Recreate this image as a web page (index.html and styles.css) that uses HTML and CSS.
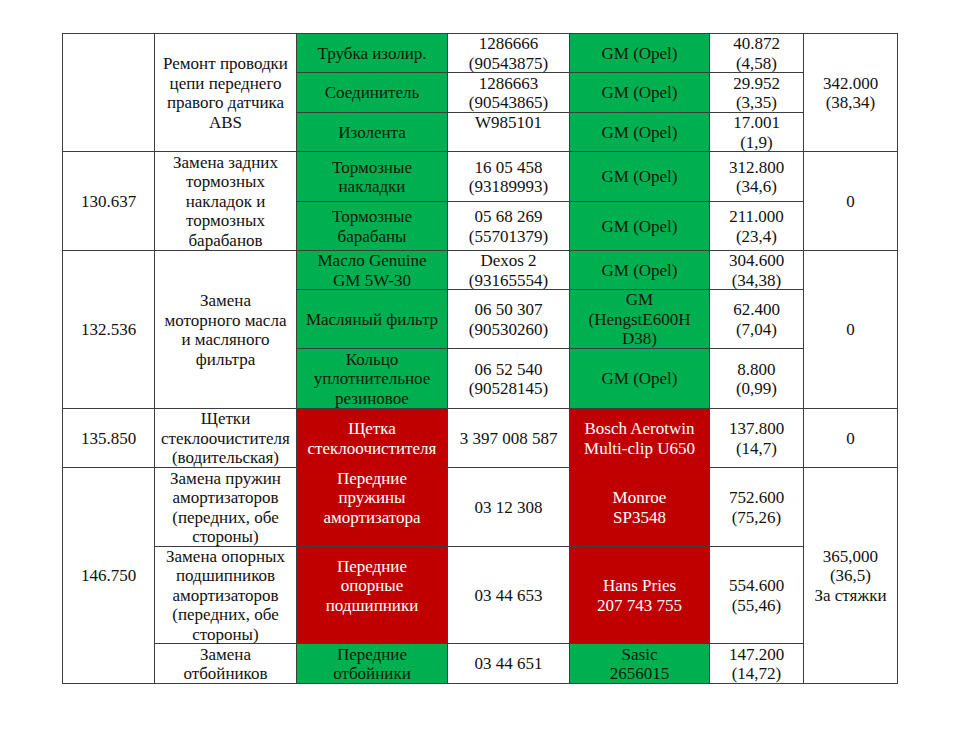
FILE: index.html
```html
<!DOCTYPE html>
<html lang="ru">
<head>
<meta charset="utf-8">
<title>Таблица</title>
<link rel="stylesheet" href="styles.css">
</head>
<body>
<div class="sheet">
  <!-- group 1 -->
  <div class="c span3"></div>
  <div class="c span3">Ремонт проводки<br>цепи переднего<br>правого датчика<br>ABS</div>
  <div class="c green">Трубка изолир.</div>
  <div class="c">1286666<br>(90543875)</div>
  <div class="c green">GM (Opel)</div>
  <div class="c">40.872<br>(4,58)</div>
  <div class="c span3">342.000<br>(38,34)</div>

  <div class="c green">Соединитель</div>
  <div class="c">1286663<br>(90543865)</div>
  <div class="c green">GM (Opel)</div>
  <div class="c">29.952<br>(3,35)</div>

  <div class="c green">Изолента</div>
  <div class="c">W985101<br>&nbsp;</div>
  <div class="c green">GM (Opel)</div>
  <div class="c">17.001<br>(1,9)</div>

  <!-- group 2 -->
  <div class="c span2">130.637</div>
  <div class="c span2">Замена задних<br>тормозных<br>накладок и<br>тормозных<br>барабанов</div>
  <div class="c green">Тормозные<br>накладки</div>
  <div class="c">16 05 458<br>(93189993)</div>
  <div class="c green">GM (Opel)</div>
  <div class="c">312.800<br>(34,6)</div>
  <div class="c span2">0</div>

  <div class="c green">Тормозные<br>барабаны</div>
  <div class="c">05 68 269<br>(55701379)</div>
  <div class="c green">GM (Opel)</div>
  <div class="c">211.000<br>(23,4)</div>

  <!-- group 3 -->
  <div class="c span3">132.536</div>
  <div class="c span3">Замена<br>моторного масла<br>и масляного<br>фильтра</div>
  <div class="c green">Масло Genuine<br>GM 5W-30</div>
  <div class="c">Dexos 2<br>(93165554)</div>
  <div class="c green">GM (Opel)</div>
  <div class="c">304.600<br>(34,38)</div>
  <div class="c span3">0</div>

  <div class="c green">Масляный фильтр</div>
  <div class="c">06 50 307<br>(90530260)</div>
  <div class="c green">GM<br>(HengstE600H<br>D38)</div>
  <div class="c">62.400<br>(7,04)</div>

  <div class="c green">Кольцо<br>уплотнительное<br>резиновое</div>
  <div class="c">06 52 540<br>(90528145)</div>
  <div class="c green">GM (Opel)</div>
  <div class="c">8.800<br>(0,99)</div>

  <!-- group 4 -->
  <div class="c">135.850</div>
  <div class="c">Щетки<br>стеклоочистителя<br>(водительская)</div>
  <div class="c red">Щетка<br>стеклоочистителя</div>
  <div class="c">3 397 008 587</div>
  <div class="c red">Bosch Aerotwin<br>Multi-clip U650</div>
  <div class="c">137.800<br>(14,7)</div>
  <div class="c">0</div>

  <!-- group 5 -->
  <div class="c span3">146.750</div>
  <div class="c">Замена пружин<br>амортизаторов<br>(передних, обе<br>стороны)</div>
  <div class="c red">Передние<br>пружины<br>амортизатора<br>&nbsp;</div>
  <div class="c">03 12 308</div>
  <div class="c red">Monroe<br>SP3548</div>
  <div class="c">752.600<br>(75,26)</div>
  <div class="c span3">365,000<br>(36,5)<br>За стяжки</div>

  <div class="c">Замена опорных<br>подшипников<br>амортизаторов<br>(передних, обе<br>стороны)</div>
  <div class="c red">Передние<br>опорные<br>подшипники<br>&nbsp;</div>
  <div class="c">03 44 653</div>
  <div class="c red">Hans Pries<br>207 743 755</div>
  <div class="c">554.600<br>(55,46)</div>

  <div class="c">Замена<br>отбойников</div>
  <div class="c green">Передние<br>отбойники</div>
  <div class="c">03 44 651</div>
  <div class="c green">Sasic<br>2656015</div>
  <div class="c">147.200<br>(14,72)</div>
</div>
</body>
</html>
```

FILE: styles.css
```css
html, body {
  margin: 0;
  padding: 0;
  background: #ffffff;
}

body {
  font-family: "Liberation Serif", "Times New Roman", serif;
  font-size: 17px;
  color: #111111;
}

.sheet {
  display: grid;
  grid-template-columns: 91px 141px 150px 121px 139px 93px 93px;
  grid-template-rows: 38px 39px 38px 49px 48px 38px 58px 59px 58px 78px 96px 39px;
  gap: 1px;
  padding: 1px;
  width: max-content;
  margin: 33px 0 0 62px;
  background: #3d3d3d;
}

.c {
  display: flex;
  align-items: center;
  justify-content: center;
  text-align: center;
  line-height: 19.5px;
  white-space: nowrap;
  background: #ffffff;
  min-height: 0;
  overflow: visible;
  padding-top: 1px;
}

.span2 {
  grid-row: span 2;
}

.span3 {
  grid-row: span 3;
}

.green {
  background: #00b050;
  color: #0a1a0a;
}

.red {
  background: #c00000;
  color: #ffffff;
}
```
